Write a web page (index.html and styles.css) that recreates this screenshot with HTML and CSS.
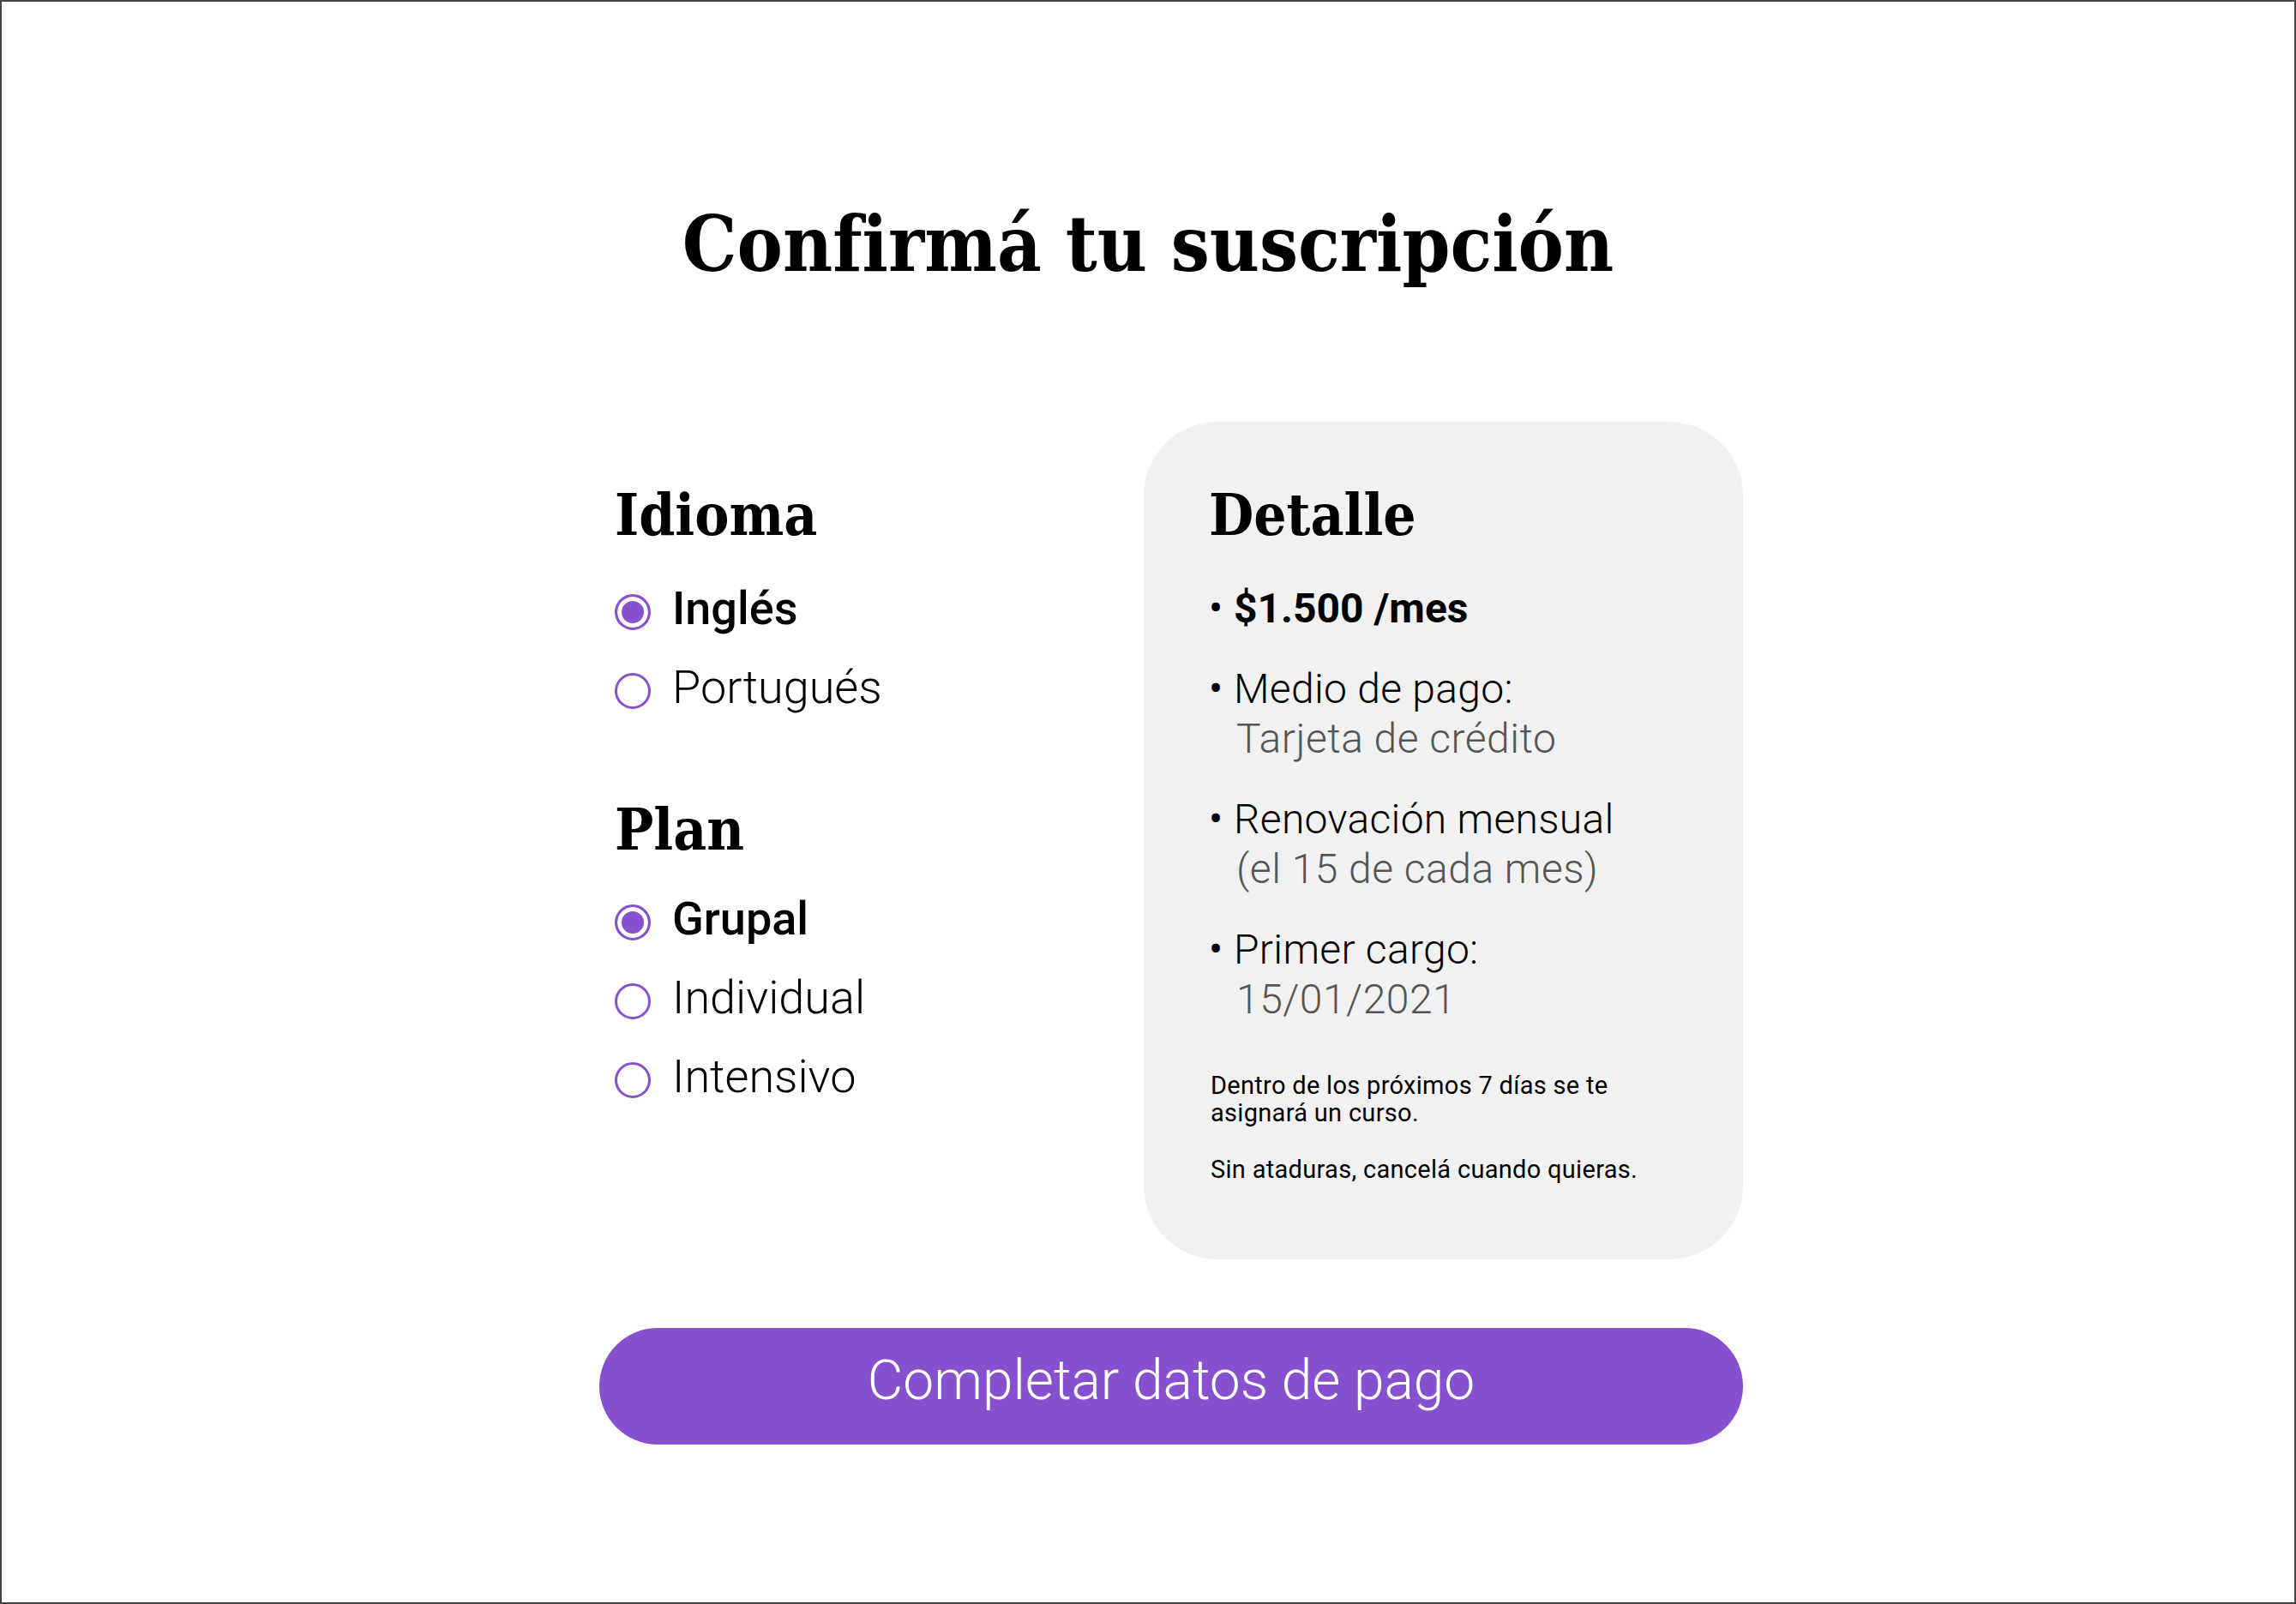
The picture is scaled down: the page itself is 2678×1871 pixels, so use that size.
FILE: index.html
```html
<!DOCTYPE html>
<html lang="es">
<head>
  <meta charset="UTF-8">
  <meta name="viewport" content="width=device-width, initial-scale=1.0">
  <title>Confirmá tu suscripción</title>
  <link rel="stylesheet" href="styles.css">
</head>
<body>
  <div class="frame">
    <h1>Confirmá tu suscripción</h1>

    <div class="content">
      <div class="columns">
        <div class="options">
          <div class="group">
            <h2>Idioma</h2>
            <label class="option"><input type="radio" name="idioma" checked><span>Inglés</span></label>
            <label class="option"><input type="radio" name="idioma"><span>Portugués</span></label>
          </div>

          <div class="group">
            <h2>Plan</h2>
            <label class="option"><input type="radio" name="plan" checked><span>Grupal</span></label>
            <label class="option"><input type="radio" name="plan"><span>Individual</span></label>
            <label class="option"><input type="radio" name="plan"><span>Intensivo</span></label>
          </div>
        </div>

        <aside class="detail">
          <h2>Detalle</h2>
          <ul class="detail-list">
            <li class="price"><span class="dot">•</span><div>$1.500 /mes</div></li>
            <li><span class="dot">•</span><div>Medio de pago:<span class="sub">Tarjeta de crédito</span></div></li>
            <li><span class="dot">•</span><div>Renovación mensual<span class="sub">(el 15 de cada mes)</span></div></li>
            <li><span class="dot">•</span><div>Primer cargo:<span class="sub">15/01/2021</span></div></li>
          </ul>
          <p class="note">Dentro de los próximos 7 días se te asignará un curso.</p>
          <p class="note">Sin ataduras, cancelá cuando quieras.</p>
        </aside>
      </div>

      <button class="pay" type="button">Completar datos de pago</button>
    </div>
  </div>
</body>
</html>
```

FILE: styles.css
```css
* {
  box-sizing: border-box;
}
body {
  margin: 0;
  font-family: Roboto, "Noto Sans", sans-serif;
  color: #000;
  background-color: #fff;
}
.frame {
  height: 100vh;
  padding-top: 228px;
  border: 2px solid #444;
}
h1,
h2 {
  margin: 0;
  font-family: "DejaVu Serif Condensed", "DejaVu Serif", serif;
  font-stretch: condensed;
  font-weight: bold;
}
h1 {
  text-align: center;
  font-size: 89px;
  line-height: 110px;
}
h2 {
  font-size: 67px;
  line-height: 86px;
}
.content {
  width: 1388px;
  margin: 152px auto 0;
  padding-left: 54px; /* block sits a bit right of the page centre */
}
.columns {
  display: grid;
  grid-template-columns: 635px 699px;
  align-items: start;
}

/* radio groups */
.options {
  padding: 66px 0 0 18px;
}
.group h2 {
  margin-bottom: 15px;
}
.group:first-child h2 {
  margin-bottom: 20px;
}
.group + .group {
  margin-top: 77px;
}
.option {
  display: flex;
  align-items: center;
  gap: 25px;
  height: 92px;
  font-size: 54px;
  font-weight: 300;
  line-height: 1;
  cursor: pointer;
}
.option input {
  appearance: none;
  flex: none;
  width: 42px;
  height: 42px;
  margin: 8px 0 0;
  border: 3px solid #8650cf;
  border-radius: 50%;
  background-color: #fff;
  cursor: pointer;
}
.option input:checked {
  background-color: #8650cf;
  box-shadow: inset 0 0 0 5px #fff;
}
.option input:checked + span {
  font-weight: 500;
}

/* detail card */
.detail {
  padding: 66px 40px 89px 76px;
  background-color: #f1f1f1;
  border-radius: 86px;
}
.detail h2 {
  margin-bottom: 37px;
}
.detail-list {
  margin: 0;
  padding: 0;
  list-style: none;
  font-size: 48px;
  line-height: 58px;
  font-weight: 300;
  letter-spacing: 0.3px;
}
.detail-list li {
  display: flex;
}
.detail-list li + li {
  margin-top: 36px;
}
.dot {
  flex: none;
  width: 29px;
  font-weight: 400;
}
.price {
  font-weight: 700;
  letter-spacing: 0;
}
.sub {
  display: block;
  padding-left: 3px;
  color: #555;
  letter-spacing: 0.5px;
}
.note {
  max-width: 560px;
  margin: 55px 0 0 2px;
  font-size: 29px;
  line-height: 32px;
  letter-spacing: 0.3px;
}
.note + .note {
  margin-top: 34px;
}

.pay {
  display: block;
  width: 100%;
  height: 136px;
  margin-top: 80px;
  padding: 0 0 12px;
  border: none;
  border-radius: 68px;
  background-color: #8650cf;
  color: #fff;
  font-family: Roboto, "Noto Sans", sans-serif;
  font-size: 64px;
  font-weight: 300;
  line-height: 1;
  cursor: pointer;
}
.pay:hover {
  background-color: #7642bd;
}
```
